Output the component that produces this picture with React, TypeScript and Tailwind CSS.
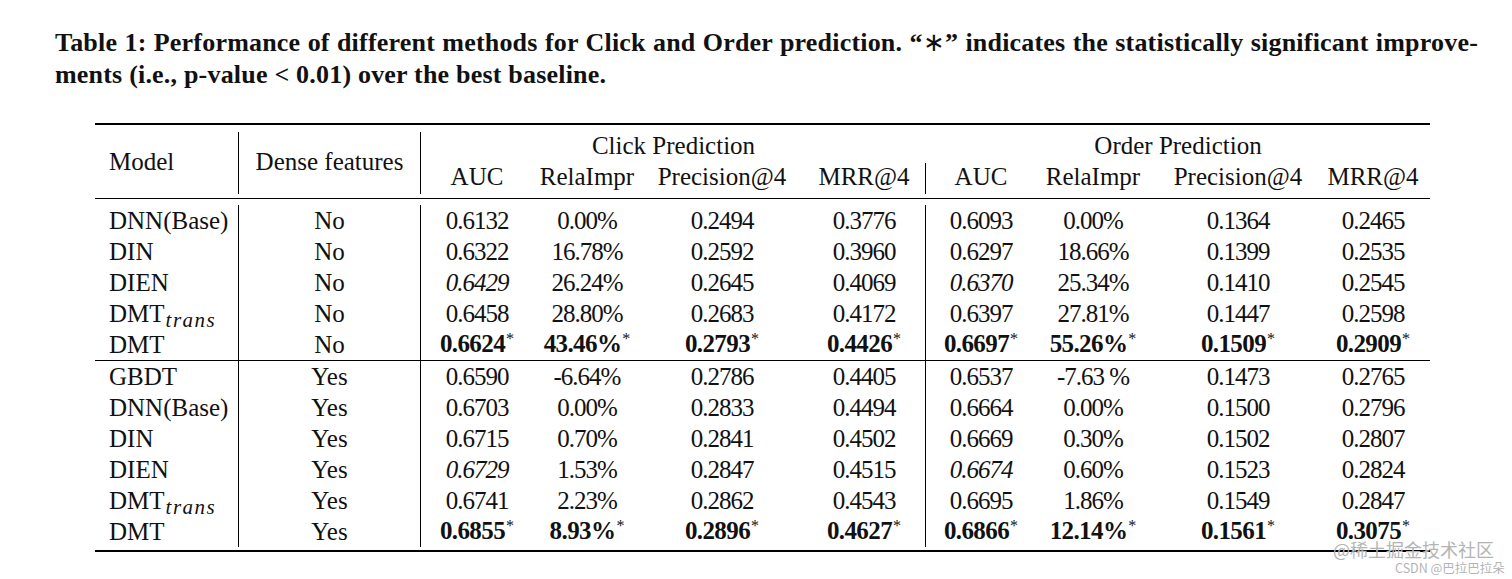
import React from "react";

type Row = { m: string; sub?: boolean; d: string; v: string[] };

const g1: Row[] = [
  { m: "DNN(Base)", d: "No", v: ["0.6132", "0.00%", "0.2494", "0.3776", "0.6093", "0.00%", "0.1364", "0.2465"] },
  { m: "DIN", d: "No", v: ["0.6322", "16.78%", "0.2592", "0.3960", "0.6297", "18.66%", "0.1399", "0.2535"] },
  { m: "DIEN", d: "No", v: ["_0.6429", "26.24%", "0.2645", "0.4069", "_0.6370", "25.34%", "0.1410", "0.2545"] },
  { m: "DMT", sub: true, d: "No", v: ["0.6458", "28.80%", "0.2683", "0.4172", "0.6397", "27.81%", "0.1447", "0.2598"] },
  { m: "DMT", d: "No", v: ["*0.6624", "*43.46%", "*0.2793", "*0.4426", "*0.6697", "*55.26%", "*0.1509", "*0.2909"] },
];

const g2: Row[] = [
  { m: "GBDT", d: "Yes", v: ["0.6590", "-6.64%", "0.2786", "0.4405", "0.6537", "-7.63 %", "0.1473", "0.2765"] },
  { m: "DNN(Base)", d: "Yes", v: ["0.6703", "0.00%", "0.2833", "0.4494", "0.6664", "0.00%", "0.1500", "0.2796"] },
  { m: "DIN", d: "Yes", v: ["0.6715", "0.70%", "0.2841", "0.4502", "0.6669", "0.30%", "0.1502", "0.2807"] },
  { m: "DIEN", d: "Yes", v: ["_0.6729", "1.53%", "0.2847", "0.4515", "_0.6674", "0.60%", "0.1523", "0.2824"] },
  { m: "DMT", sub: true, d: "Yes", v: ["0.6741", "2.23%", "0.2862", "0.4543", "0.6695", "1.86%", "0.1549", "0.2847"] },
  { m: "DMT", d: "Yes", v: ["*0.6855", "*8.93%", "*0.2896", "*0.4627", "*0.6866", "*12.14%", "*0.1561", "*0.3075"] },
];

const GRID =
  "grid grid-cols-[144px_182px_112px_108px_162px_123px_110px_114px_176px_104px]";

function Val({ v }: { v: string }) {
  if (v.startsWith("*")) {
    return (
      <span className="font-bold tracking-[-0.6px]">
        {v.slice(1)}
        <span className="relative -top-[8px] ml-[1px] text-[16px] font-normal tracking-normal">*</span>
      </span>
    );
  }
  if (v.startsWith("_")) {
    return <span className="italic tracking-[-1px]">{v.slice(1)}</span>;
  }
  return <span className="tracking-[-1px]">{v}</span>;
}

function Model({ r }: { r: Row }) {
  return (
    <div className="h-[31px] flex items-center pl-[14px] border-r border-black">
      <span>{r.m}</span>
      {r.sub && (
        <span className="relative top-[7px] ml-[1px] text-[21px] italic tracking-[1.5px]">trans</span>
      )}
    </div>
  );
}

function DataRow({ r }: { r: Row }) {
  return (
    <>
      <Model r={r} />
      <div className="h-[31px] flex items-center justify-center border-r border-black">{r.d}</div>
      {r.v.map((v, i) => (
        <div
          key={i}
          className={
            "h-[31px] flex items-center justify-center " +
            (i === 3 ? "border-r border-black " : "") +
            (i === 7 ? "pr-[10px]" : "")
          }
        >
          <Val v={v} />
        </div>
      ))}
    </>
  );
}

const sub = ["AUC", "RelaImpr", "Precision@4", "MRR@4"];

export default function App() {
  return (
    <div
      className="relative w-[1512px] h-[579px] bg-white overflow-hidden text-[#111]"
      style={{ fontFamily: '"Liberation Serif", "Times New Roman", serif' }}
    >
      <div className="pt-[27px] pl-[55px] text-[26px] font-bold leading-[32px] tracking-[0.2px]">
        <div className="w-[1423px] text-justify [text-align-last:justify]">
          Table 1: Performance of different methods for Click and Order prediction. “<span className="font-normal">∗</span>” indicates the statistically significant improve-
        </div>
        <div>ments (i.e., p-value &lt; 0.01) over the best baseline.</div>
      </div>

      <div className="ml-[95px] mt-[32px] w-[1335px] text-[25px] leading-[31px]">
        <div className="h-[2px] bg-black" />
        <div className={GRID + " mt-[7px]"}>
          <div className="row-span-2 flex items-center pl-[14px] pb-[4px] border-r border-black">Model</div>
          <div className="row-span-2 flex items-center justify-center pb-[4px] border-r border-black">Dense features</div>
          <div className="col-span-4 h-[31px] flex items-center justify-center pb-[4px]">Click Prediction</div>
          <div className="col-span-4 h-[31px] flex items-center justify-center pb-[4px]">Order Prediction</div>
          {sub.map((s, i) => (
            <div
              key={"c" + i}
              className={"h-[31px] flex items-center justify-center pb-[4px] " + (i === 3 ? "border-r border-black" : "")}
            >
              {s}
            </div>
          ))}
          {sub.map((s, i) => (
            <div
              key={"o" + i}
              className={"h-[31px] flex items-center justify-center pb-[4px] " + (i === 3 ? "pr-[10px]" : "")}
            >
              {s}
            </div>
          ))}
        </div>
        <div className="mt-[4px] h-[1px] bg-black" />
        <div className={GRID + " mt-[6px]"}>
          {g1.map((r, i) => (
            <DataRow key={i} r={r} />
          ))}
        </div>
        <div className="h-[1px] bg-black" />
        <div className={GRID}>
          {g2.map((r, i) => (
            <DataRow key={i} r={r} />
          ))}
        </div>
        <div className="mt-[3px] h-[2px] bg-black" />
      </div>

      <div
        className="absolute left-[1333px] top-[539px] text-[18px] leading-[20px] text-[#b4b4b4]"
        style={{ fontFamily: '"Noto Sans CJK SC", "Noto Sans", sans-serif' }}
      >
        @稀土掘金技术社区
      </div>
      <div
        className="absolute left-[1395px] top-[561px] text-[12.5px] leading-[14px] text-[#b4b4b4]"
        style={{ fontFamily: '"Noto Sans CJK SC", "Noto Sans", sans-serif' }}
      >
        CSDN @巴拉巴拉朵
      </div>
    </div>
  );
}
